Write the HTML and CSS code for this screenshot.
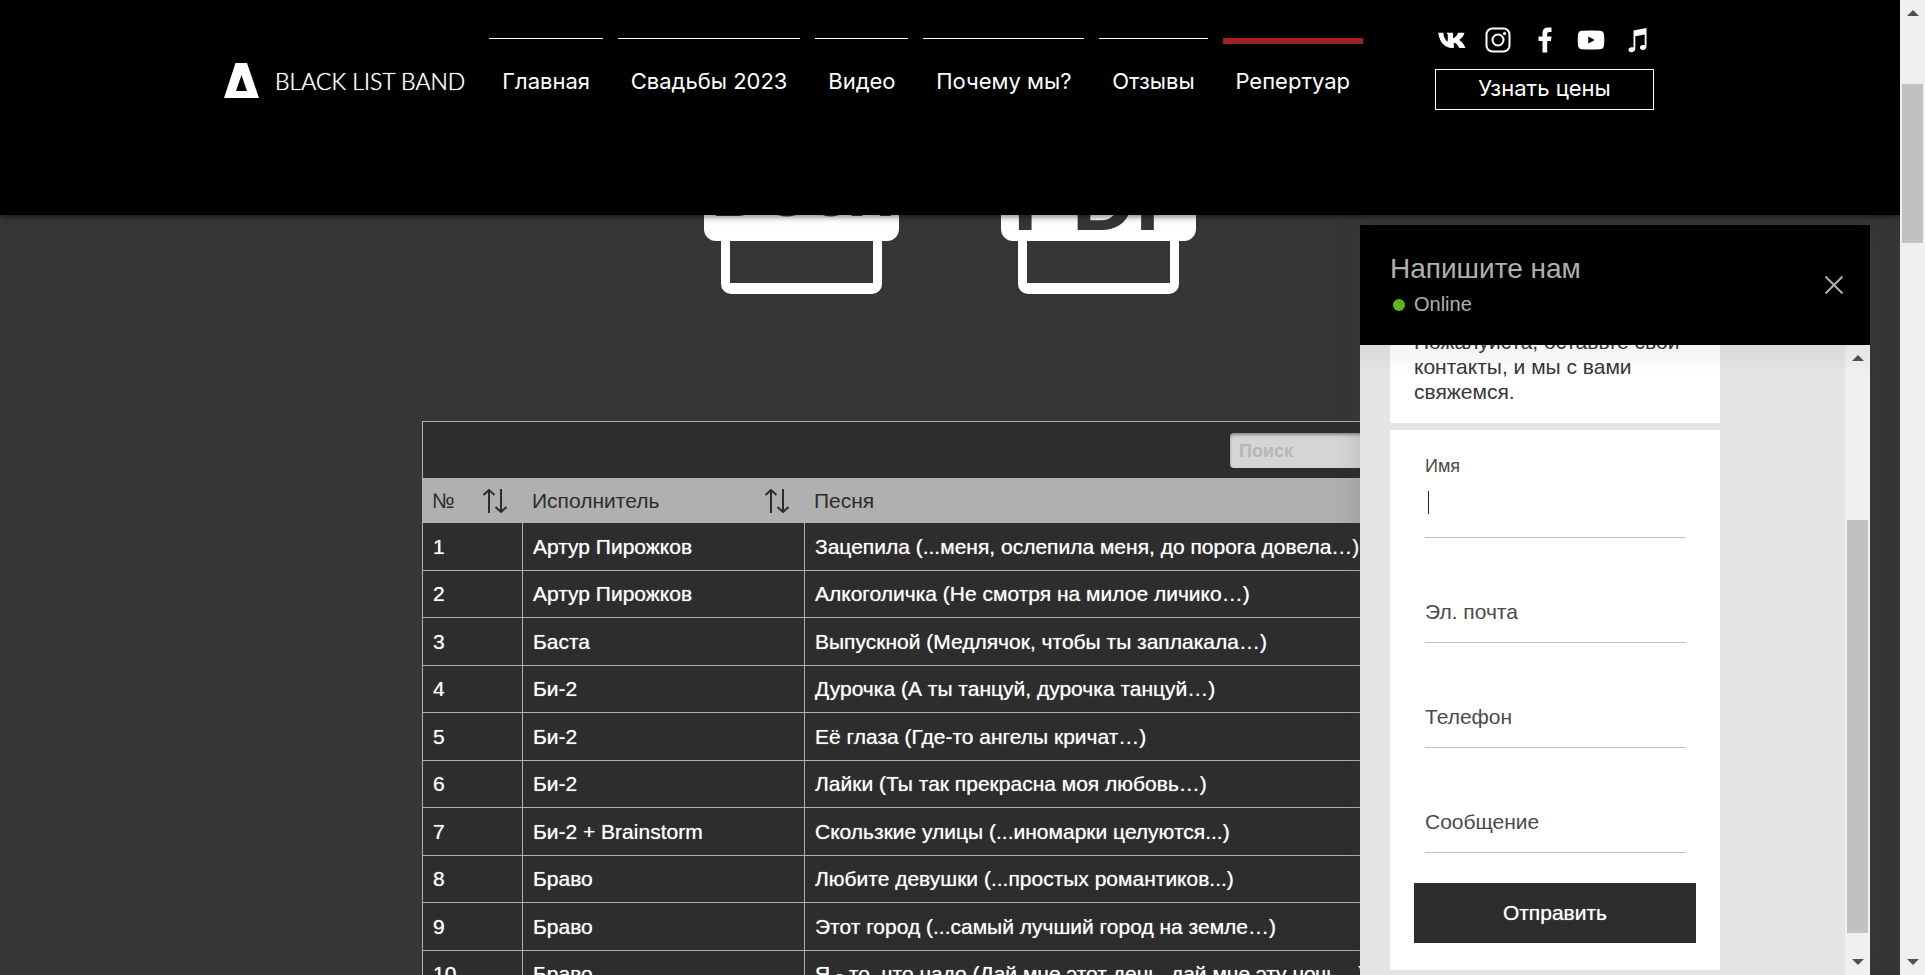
FILE: index.html
```
<!DOCTYPE html>
<html lang="ru">
<head>
<meta charset="utf-8">
<title>Black List Band — Репертуар</title>
<link rel="stylesheet" href="styles.css">
</head>
<body>
<div class="page">
  <header class="site-header">
    <a class="brand" href="#">
      <svg class="brand-mark" viewBox="0 0 35 35" aria-hidden="true"><path fill="#fff" fill-rule="evenodd" d="M11.500 0H23L35 35H0ZM17.500 12L12 28H23Z"/></svg>
      <span class="brand-name">BLACK LIST BAND</span>
    </a>
    <nav class="nav">
      <a class="nav-link" href="#">Главная</a>
      <a class="nav-link" href="#">Свадьбы 2023</a>
      <a class="nav-link" href="#">Видео</a>
      <a class="nav-link" href="#">Почему мы?</a>
      <a class="nav-link" href="#">Отзывы</a>
      <a class="nav-link nav-link-active" href="#">Репертуар</a>
    </nav>
    <div class="header-side">
      <div class="socials">
        <a href="#" aria-label="VK"><svg class="social-icon" viewBox="0 0 30 30"><path fill="#fff" d="M15.600 23C6.500 23 2.400 16 1.200 7.800H6.300C6.700 12.500 8.700 15.600 10.800 16.600V9.500L9.500 7.800H16V13.200C18.200 12.600 20.200 10.500 21.100 7.800H27.500C26.500 11.200 24.300 13.700 22.300 15C24.200 16.200 26.700 18.600 28.500 23H22.300C21.200 20.600 19.200 18.200 16.800 17.600V23Z"/></svg></a>
        <a href="#" aria-label="Instagram"><svg class="social-icon" viewBox="0 0 30 30" fill="none" stroke="#fff"><rect x="3.500" y="3.500" width="23" height="23" rx="6" stroke-width="2"/><circle cx="15" cy="15" r="5.500" stroke-width="2"/><circle cx="21.500" cy="8.500" r="1.600" fill="#fff" stroke="none"/></svg></a>
        <a href="#" aria-label="Facebook"><svg class="social-icon" viewBox="0 0 30 30"><path fill="#fff" d="M12.500 27.500V16H8.500V11.500H12.500V8.500C12.500 4.500 14.500 2.500 18 2.500H21.500V7H19.300C17.800 7 17.200 7.700 17.200 9.100V11.500H21.500L21 16H17.200V27.500Z"/></svg></a>
        <a href="#" aria-label="YouTube"><svg class="social-icon" viewBox="0 0 30 30"><path fill="#fff" fill-rule="evenodd" d="M6 5.800Q15 5 24 5.800Q27.600 6 28 9.500Q28.600 15 28 20.500Q27.600 24 24 24.200Q15 25 6 24.200Q2.400 24 2 20.500Q1.400 15 2 9.500Q2.400 6 6 5.800ZM12.300 11.500V18.500L18.700 15Z"/></svg></a>
        <a href="#" aria-label="Музыка"><svg class="social-icon" viewBox="0 0 30 30"><path fill="#fff" d="M11.500 5.500L24.500 3V21.500C24.500 24 22.500 25 20.800 25C17 25 17.200 20 20.800 20C21.600 20 22.100 20.100 22.700 20.300V9.500L13.300 11.300V23.800C13.300 26 11.500 27.300 9.300 27.300C5.500 27.300 5.700 22.300 9.500 22.300C10.300 22.300 10.900 22.400 11.500 22.600Z"/></svg></a>
      </div>
      <button class="price-button" type="button">Узнать цены</button>
    </div>
  </header>

  <main class="content">
    <div class="downloads">
      <a class="doc doc-docx" href="#"><span class="doc-label">Docx</span><span class="doc-sheet"></span></a>
      <a class="doc doc-pdf" href="#"><span class="doc-label">PDF</span><span class="doc-sheet"></span></a>
    </div>
    <section class="songs">
      <div class="songs-toolbar"><input class="search" type="search" placeholder="Поиск" aria-label="Поиск"></div>
      <table class="songs-table">
        <thead>
          <tr>
            <th class="col-num"><div class="th-inner">№ <svg class="sort-icon" viewBox="0 0 24 24"><path d="M6 24V1M.500 6L6 1L11.500 6M18 0V23M12.500 18L18 23L23.500 18"/></svg></div></th>
            <th class="col-artist"><div class="th-inner">Исполнитель <svg class="sort-icon" viewBox="0 0 24 24"><path d="M6 24V1M.500 6L6 1L11.500 6M18 0V23M12.500 18L18 23L23.500 18"/></svg></div></th>
            <th><div class="th-inner">Песня</div></th>
          </tr>
        </thead>
        <tbody>
          <tr><td>1</td><td>Артур Пирожков</td><td>Зацепила (...меня, ослепила меня, до порога довела…)</td></tr>
          <tr><td>2</td><td>Артур Пирожков</td><td>Алкоголичка (Не смотря на милое личико…)</td></tr>
          <tr><td>3</td><td>Баста</td><td>Выпускной (Медлячок, чтобы ты заплакала…)</td></tr>
          <tr><td>4</td><td>Би-2</td><td>Дурочка (А ты танцуй, дурочка танцуй…)</td></tr>
          <tr><td>5</td><td>Би-2</td><td>Её глаза (Где-то ангелы кричат…)</td></tr>
          <tr><td>6</td><td>Би-2</td><td>Лайки (Ты так прекрасна моя любовь…)</td></tr>
          <tr><td>7</td><td>Би-2 + Brainstorm</td><td>Скользкие улицы (...иномарки целуются...)</td></tr>
          <tr><td>8</td><td>Браво</td><td>Любите девушки (...простых романтиков...)</td></tr>
          <tr><td>9</td><td>Браво</td><td>Этот город (...самый лучший город на земле…)</td></tr>
          <tr><td>10</td><td>Браво</td><td>Я - то, что надо (Дай мне этот день, дай мне эту ночь…)</td></tr>
        </tbody>
      </table>
    </section>
  </main>

  <aside class="chat">
    <div class="chat-header">
      <div>
        <h2 class="chat-title">Напишите нам</h2>
        <p class="chat-status">Online</p>
      </div>
      <button class="chat-close" type="button" aria-label="Закрыть"><svg class="close-icon" viewBox="0 0 18 18"><path d="M.500 .500L17.500 17.500M17.500 .500L.500 17.500"/></svg></button>
    </div>
    <div class="chat-main">
      <div class="chat-body">
        <p class="chat-message">Пожалуйста, оставьте свои контакты, и мы с вами свяжемся.</p>
        <form class="chat-form">
          <div class="field field-active"><label for="name">Имя</label><input id="name" type="text"></div>
          <div class="field"><label for="email">Эл. почта</label><input id="email" type="email"></div>
          <div class="field"><label for="phone">Телефон</label><input id="phone" type="tel"></div>
          <div class="field"><label for="message">Сообщение</label><input id="message" type="text"></div>
          <button class="send-button" type="submit">Отправить</button>
        </form>
      </div>
      <div class="scrollbar chat-scrollbar" aria-hidden="true"><i class="arrow arrow-up"></i><i class="thumb"></i><i class="arrow arrow-down"></i></div>
    </div>
  </aside>
</div>
<div class="scrollbar page-scrollbar" aria-hidden="true"><i class="arrow arrow-up"></i><i class="thumb"></i><i class="arrow arrow-down"></i></div>
</body>
</html>
```
FILE: styles.css
```
* { box-sizing: border-box; }

body {
  margin: 0;
  height: 100vh;
  display: grid;
  grid-template-columns: 1fr 25px;
  overflow: hidden;
  background: #363636;
  font-family: "Liberation Sans", Arial, sans-serif;
  font-size: 21px;
}

a { color: inherit; text-decoration: none; }
button, input { font: inherit; }

.page { position: relative; overflow: hidden; height: 100vh; }

/* Header */
.site-header {
  position: absolute;
  inset: 0 0 auto 0;
  z-index: 2;
  height: 215px;
  padding: 0 246px 0 224px;
  display: flex;
  align-items: flex-start;
  background: #000;
  color: #fff;
  box-shadow: 0 2px 6px rgba(0, 0, 0, .5);
  font-family: Inter, "Open Sans", sans-serif;
  font-size: 22px;
}
.brand { display: flex; align-items: center; gap: 16px; margin-top: 63px; height: 35px; }
.brand-mark { width: 35px; height: 35px; }
.brand-name { font-family: Lato, sans-serif; font-size: 23px; font-weight: 300; white-space: nowrap; text-shadow: 0 0 1px #fff; }

.nav { flex: 1; display: flex; align-items: flex-start; gap: 15px; margin: 38px 72px 0 24px; }
.nav-link {
  flex: 1 0 auto;
  height: 60px;
  padding: 0 12px;
  border-top: 1px solid #fff;
  line-height: 84px;
  text-align: center;
  white-space: nowrap;
}
.nav-link-active { border-top: 6px solid #9e2226; line-height: 74px; }

.header-side { flex: none; width: 219px; padding-top: 25px; }
.socials { display: flex; justify-content: space-between; padding: 0 2px; height: 44px; }
.social-icon { display: block; width: 30px; height: 30px; }
.price-button {
  display: block;
  width: 100%;
  height: 41px;
  padding: 0 0 3px;
  border: 1px solid #fff;
  background: transparent;
  color: #fff;
}

/* Download icons */
.content { display: flex; flex-direction: column; align-items: center; }
.downloads { display: flex; gap: 102px; height: 294px; padding-top: 94px; }
.doc { display: flex; flex-direction: column; align-items: center; width: 195px; color: #363636; }
.doc-label {
  width: 100%;
  height: 147px;
  border-radius: 12px;
  background: #fff;
  font-weight: bold;
  text-align: center;
  white-space: nowrap;
}
.doc-docx .doc-label { font-size: 74px; line-height: 194px; }
.doc-pdf .doc-label { padding-left: 5px; font-size: 88px; line-height: 212px; }
.doc-sheet {
  width: 161px;
  height: 53px;
  border: 9px solid #fff;
  border-width: 0 9px 11px;
  border-radius: 0 0 10px 10px;
}

/* Song table */
.songs { width: 1056px; margin-top: 127px; border: 1px solid #b0b0b0; background: #2d2d2d; color: #fff; }
.songs-toolbar { display: flex; justify-content: flex-end; padding: 11px 9px 10px; }
.search {
  width: 238px;
  height: 35px;
  padding: 2px 9px 0;
  border: 0;
  border-radius: 4px;
  background: #d5d5d5;
  box-shadow: inset 0 2px 3px rgba(0, 0, 0, .35);
  font-size: 18px;
  font-weight: bold;
}
.search::placeholder { color: #b6b6b6; opacity: 1; }
.songs-table { width: 100%; border-collapse: separate; border-spacing: 0; table-layout: fixed; }
.songs-table th { height: 45px; padding: 0 16px 0 9px; background: #b0b0b0; color: #2d2d2d; font-weight: normal; text-align: left; }
.th-inner { display: flex; align-items: center; justify-content: space-between; }
.col-num { width: 100px; }
.col-artist { width: 282px; }
.sort-icon { width: 24px; height: 24px; fill: none; stroke: #2d2d2d; stroke-width: 2; }
.songs-table td {
  height: 48px;
  padding: 0 10px;
  border: solid #b0b0b0;
  border-width: 0 1px 1px 0;
  white-space: nowrap;
  text-shadow: 0 0 1px rgba(255, 255, 255, .7);
}
.songs-table tr:nth-child(even) td { height: 47px; }

/* Chat */
.chat {
  position: absolute;
  inset: 225px 30px 0 auto;
  z-index: 3;
  width: 510px;
  display: flex;
  flex-direction: column;
  background: #e4e4e4;
  box-shadow: 0 0 24px rgba(45, 60, 50, .2);
}
.chat-header {
  height: 120px;
  padding: 0 27px 0 30px;
  display: flex;
  align-items: center;
  justify-content: space-between;
  background: #000;
  color: #b0b0b0;
}
.chat-title { margin: 0; padding-top: 3px; font-size: 28px; line-height: 36px; font-weight: normal; }
.chat-status { display: flex; align-items: center; gap: 9px; margin: 0; padding-left: 3px; font-size: 20px; line-height: 35px; }
.chat-status::before { content: ""; width: 12px; height: 12px; border-radius: 50%; background: #5ab61e; }
.chat-close { padding: 0; border: 0; background: none; }
.close-icon { display: block; width: 18px; height: 18px; fill: none; stroke: #b0b0b0; stroke-width: 2; }
.chat-main { position: relative; flex: 1; min-height: 0; display: grid; grid-template-columns: 1fr 25px; }
.chat-main::before {
  content: "";
  position: absolute;
  inset: 0 0 auto 0;
  z-index: 1;
  height: 30px;
  background: linear-gradient(rgba(0, 0, 0, .05), rgba(0, 0, 0, 0));
}
.chat-body {
  display: flex;
  flex-direction: column;
  justify-content: flex-end;
  gap: 7px;
  min-height: 0;
  padding: 0 125px 5px 30px;
  overflow: hidden;
}
.chat-message { flex: none; margin: 0; padding: 20px 24px 19px; background: #fff; color: #363636; line-height: 25px; }
.chat-form { flex: none; padding: 3px 24px 27px; background: #fff; }
.field {
  display: flex;
  flex-direction: column;
  justify-content: flex-end;
  height: 105px;
  margin: 0 10px 0 11px;
  border-bottom: 1px solid #c0c0c0;
  color: #4a4a4a;
}
.field label { line-height: 24px; }
.field input { height: 18px; padding: 0; border: 0; outline: 0; background: transparent; }
.field-active label { font-size: 18px; line-height: 24px; }
.field-active input {
  height: 59px;
  background: linear-gradient(#222, #222) 3px 13px / 1px 23px no-repeat;
}
.send-button {
  width: 100%;
  height: 60px;
  margin-top: 30px;
  border: 0;
  background: #2d2d2d;
  color: #fff;
  text-shadow: 0 0 1px rgba(255, 255, 255, .7);
}

/* Scrollbars */
.scrollbar { position: relative; background: #f0f0f0; }
.thumb { position: absolute; left: 2px; right: 2px; background: #c1c1c1; }
.page-scrollbar .thumb { top: 84px; height: 159px; }
.chat-scrollbar .thumb { top: 175px; bottom: 42px; }
.arrow { position: absolute; left: 7px; border: solid transparent; border-width: 0 6px; }
.arrow-up { top: 10px; border-bottom: 6px solid #505050; }
.arrow-down { bottom: 10px; border-top: 6px solid #505050; }
```
